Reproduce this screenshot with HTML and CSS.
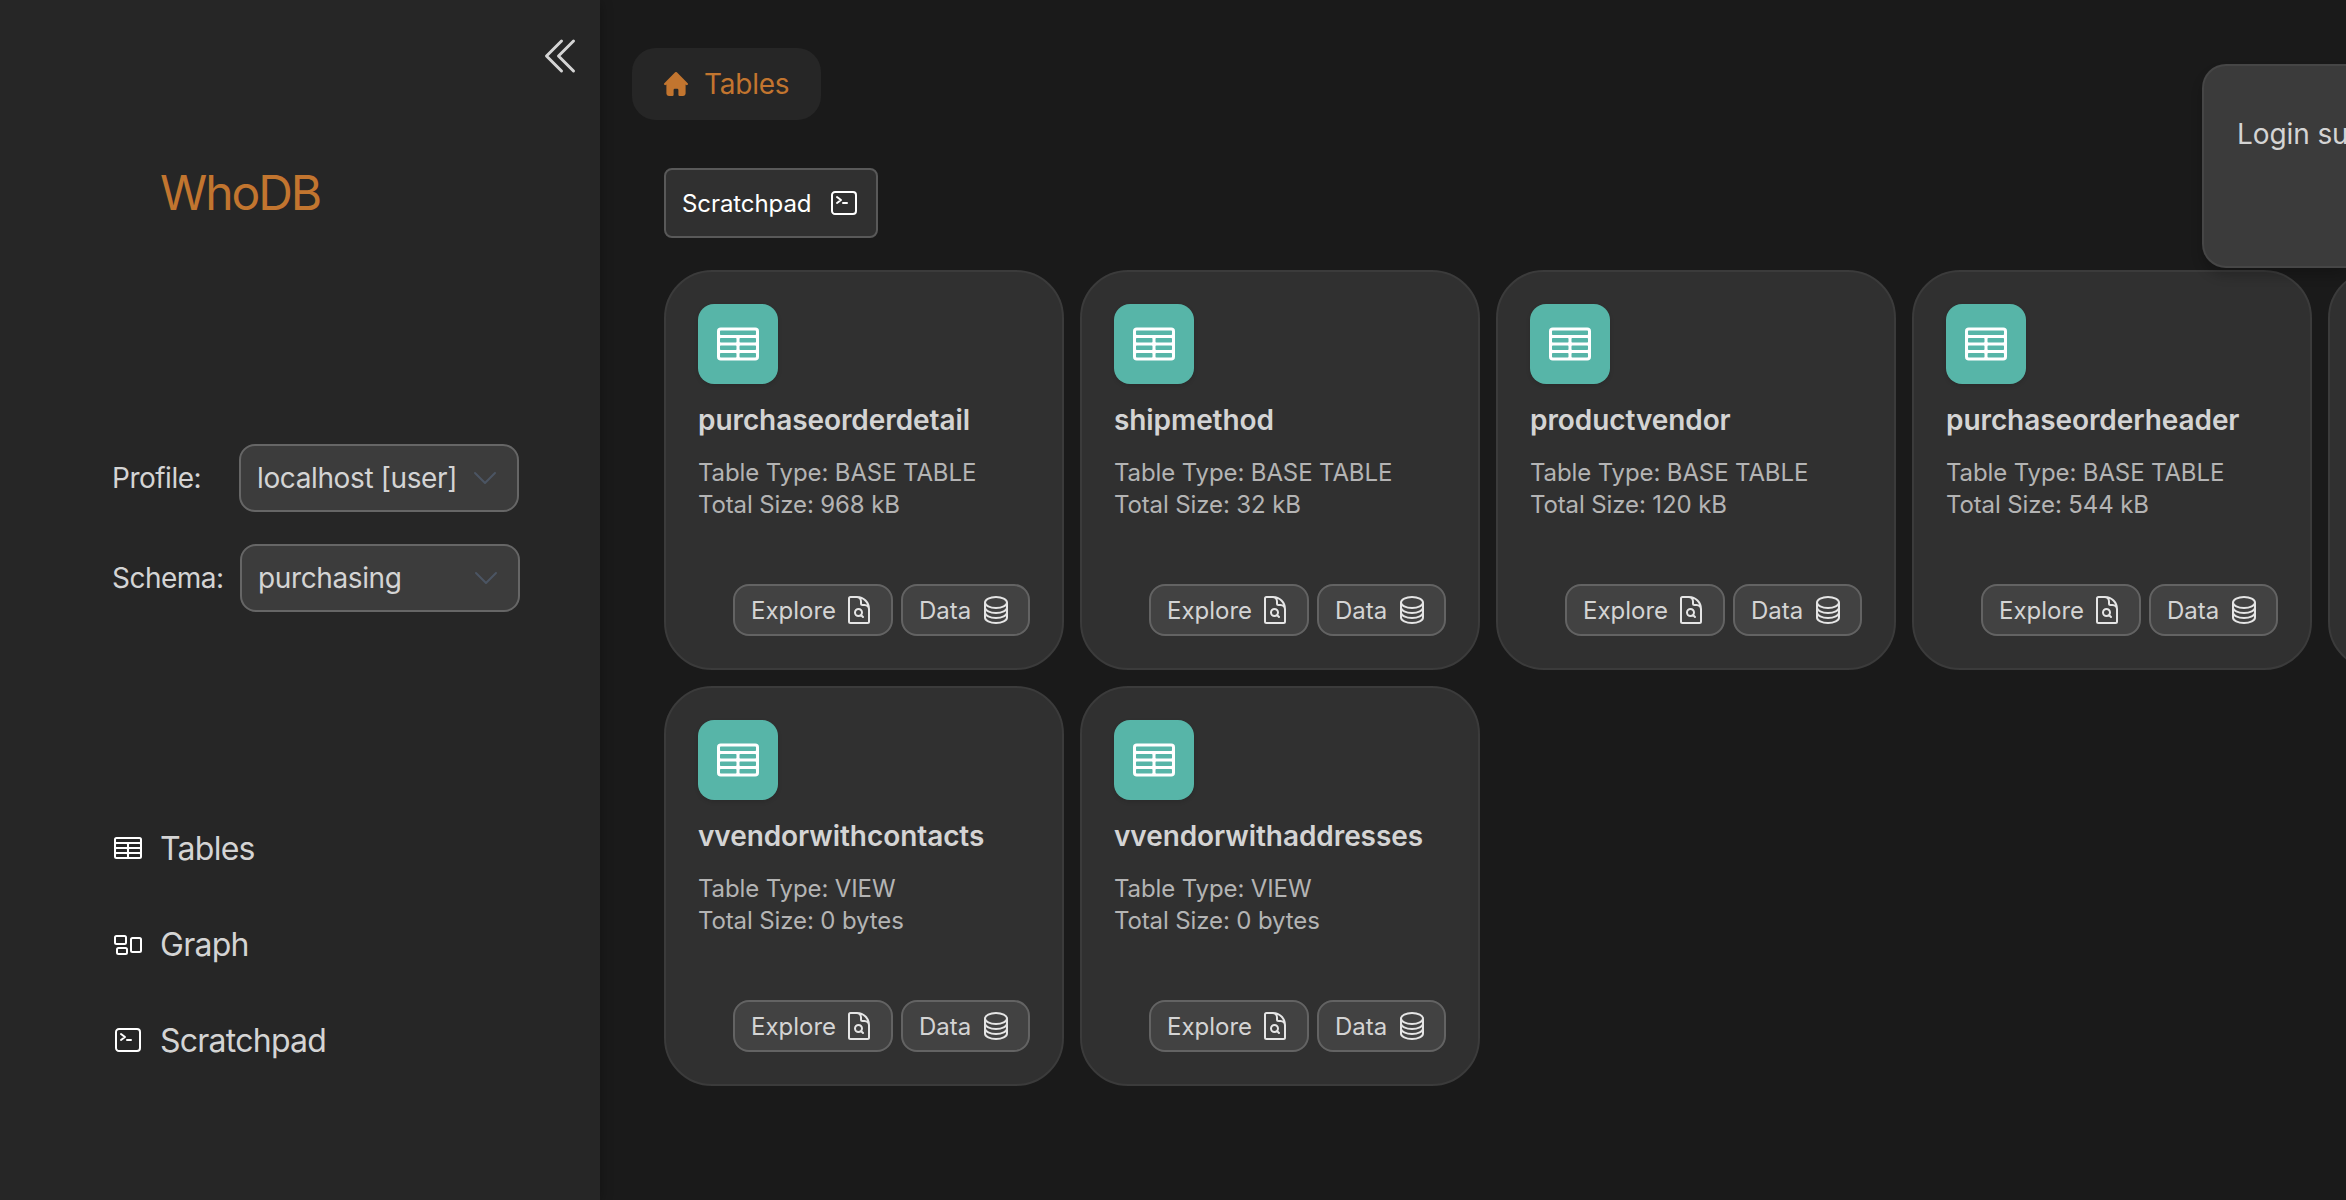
FILE: index.html
```html
<!DOCTYPE html>
<html lang="en">
<head>
<meta charset="utf-8">
<title>WhoDB</title>
<link rel="stylesheet" href="styles.css">
</head>
<body>
<svg class="sprite" aria-hidden="true">
  <symbol id="i-table" viewBox="0 0 24 24"><path fill="none" stroke="currentColor" stroke-width="1.5" stroke-linecap="round" stroke-linejoin="round" d="M3.375 19.5h17.25m-17.25 0a1.125 1.125 0 0 1-1.125-1.125M3.375 19.5h7.5c.621 0 1.125-.504 1.125-1.125m-9.75 0V5.625m0 12.75v-1.5c0-.621.504-1.125 1.125-1.125m18.375 2.625V5.625m0 12.75c0 .621-.504 1.125-1.125 1.125m1.125-1.125v-1.5c0-.621-.504-1.125-1.125-1.125m0 3.75h-7.5A1.125 1.125 0 0 1 12 18.375m9.75-12.75c0-.621-.504-1.125-1.125-1.125H3.375c-.621 0-1.125.504-1.125 1.125m19.5 0v1.5c0 .621-.504 1.125-1.125 1.125M2.25 5.625v1.5c0 .621.504 1.125 1.125 1.125m0 0h17.25m-17.25 0h7.5c.621 0 1.125.504 1.125 1.125M3.375 8.25c-.621 0-1.125.504-1.125 1.125v1.5c0 .621.504 1.125 1.125 1.125m17.25-3.75h-7.5c-.621 0-1.125.504-1.125 1.125m8.625-1.125c.621 0 1.125.504 1.125 1.125v1.5c0 .621-.504 1.125-1.125 1.125m-17.25 0h7.5m-7.5 0c-.621 0-1.125.504-1.125 1.125v1.5c0 .621.504 1.125 1.125 1.125M12 10.875v-1.5m0 1.5c0 .621-.504 1.125-1.125 1.125M12 10.875c0 .621.504 1.125 1.125 1.125m-2.25 0c.621 0 1.125.504 1.125 1.125M13.125 12h7.5m-7.5 0c-.621 0-1.125.504-1.125 1.125M20.625 12c.621 0 1.125.504 1.125 1.125v1.5c0 .621-.504 1.125-1.125 1.125m-17.25 0h7.5M12 14.625v-1.5m0 1.5c0 .621-.504 1.125-1.125 1.125M12 14.625c0 .621.504 1.125 1.125 1.125m-2.25 0c.621 0 1.125.504 1.125 1.125m0 1.5v-1.5m0 0c0-.621.504-1.125 1.125-1.125m0 0h7.5"/></symbol>
  <symbol id="i-graph" viewBox="0 0 24 24"><path fill="none" stroke="currentColor" stroke-width="1.5" stroke-linecap="round" stroke-linejoin="round" d="M2.25 7.125C2.25 6.504 2.754 6 3.375 6h6c.621 0 1.125.504 1.125 1.125v3.75c0 .621-.504 1.125-1.125 1.125h-6a1.125 1.125 0 0 1-1.125-1.125v-3.75ZM14.25 8.625c0-.621.504-1.125 1.125-1.125h5.25c.621 0 1.125.504 1.125 1.125v8.25c0 .621-.504 1.125-1.125 1.125h-5.25a1.125 1.125 0 0 1-1.125-1.125v-8.25ZM3.75 16.125c0-.621.504-1.125 1.125-1.125h5.25c.621 0 1.125.504 1.125 1.125v2.25c0 .621-.504 1.125-1.125 1.125h-5.25a1.125 1.125 0 0 1-1.125-1.125v-2.25Z"/></symbol>
  <symbol id="i-term" viewBox="0 0 24 24"><path fill="none" stroke="currentColor" stroke-width="1.5" stroke-linecap="round" stroke-linejoin="round" d="m6.75 7.5 3 2.25-3 2.25m4.5 0h3m-9 8.25h13.5A2.25 2.25 0 0 0 21 18V6a2.25 2.25 0 0 0-2.25-2.25H5.25A2.25 2.25 0 0 0 3 6v12a2.25 2.25 0 0 0 2.25 2.25Z"/></symbol>
  <symbol id="i-db" viewBox="0 0 24 24"><path fill="none" stroke="currentColor" stroke-width="1.5" stroke-linecap="round" stroke-linejoin="round" d="M20.25 6.375c0 2.278-3.694 4.125-8.25 4.125S3.75 8.653 3.75 6.375m16.5 0c0-2.278-3.694-4.125-8.25-4.125S3.75 4.097 3.75 6.375m16.5 0v11.25c0 2.278-3.694 4.125-8.25 4.125s-8.25-1.847-8.25-4.125V6.375m16.5 0v3.75m-16.5-3.75v3.75m16.5 0v3.75C20.25 16.153 16.556 18 12 18s-8.25-1.847-8.25-4.125v-3.75m16.5 0c0 2.278-3.694 4.125-8.25 4.125s-8.25-1.847-8.25-4.125"/></symbol>
  <symbol id="i-doc" viewBox="0 0 24 24"><path fill="none" stroke="currentColor" stroke-width="1.5" stroke-linecap="round" stroke-linejoin="round" d="M19.5 14.25v-2.625a3.375 3.375 0 0 0-3.375-3.375h-1.5A1.125 1.125 0 0 1 13.5 7.125v-1.5a3.375 3.375 0 0 0-3.375-3.375H8.25m5.231 13.481L15 17.25m-4.5-15H5.625c-.621 0-1.125.504-1.125 1.125v17.25c0 .621.504 1.125 1.125 1.125h12.75c.621 0 1.125-.504 1.125-1.125V11.25a9 9 0 0 0-9-9Zm3.75 11.625a2.625 2.625 0 1 1-5.25 0 2.625 2.625 0 0 1 5.25 0Z"/></symbol>
  <symbol id="i-chev" viewBox="0 0 24 24"><path fill="none" stroke="currentColor" stroke-width="1.5" stroke-linecap="round" stroke-linejoin="round" d="m19.5 8.25-7.5 7.5-7.5-7.5"/></symbol>
  <symbol id="i-collapse" viewBox="0 0 24 24"><path fill="none" stroke="currentColor" stroke-width="1.5" stroke-linecap="round" stroke-linejoin="round" d="m18.75 4.5-7.5 7.5 7.5 7.5m-6-15L5.25 12l7.5 7.5"/></symbol>
  <symbol id="i-home" viewBox="0 0 20 20"><path fill="currentColor" d="m19.707 9.293-2-2-7-7a1 1 0 0 0-1.414 0l-7 7-2 2a1 1 0 0 0 1.414 1.414L2 10.414V18a2 2 0 0 0 2 2h3a1 1 0 0 0 1-1v-4a1 1 0 0 1 1-1h2a1 1 0 0 1 1 1v4a1 1 0 0 0 1 1h3a2 2 0 0 0 2-2v-7.586l.293.293a1 1 0 0 0 1.414-1.414Z"/></symbol>
</svg>
<div class="app">
  <aside class="sidebar">
    <div class="collapse"><svg><use href="#i-collapse"/></svg></div>
    <h1 class="brand">WhoDB</h1>
    <div class="fields">
      <div class="field"><span class="field-label profile">Profile:</span><div class="select"><span>localhost [user]</span><svg><use href="#i-chev"/></svg></div></div>
      <div class="field"><span class="field-label schema">Schema:</span><div class="select"><span>purchasing</span><svg><use href="#i-chev"/></svg></div></div>
    </div>
    <nav class="nav">
      <a><svg><use href="#i-table"/></svg><span>Tables</span></a>
      <a><svg><use href="#i-graph"/></svg><span>Graph</span></a>
      <a><svg><use href="#i-term"/></svg><span>Scratchpad</span></a>
    </nav>
  </aside>
  <main class="main">
    <div class="crumb"><svg><use href="#i-home"/></svg><span>Tables</span></div>
    <div class="content">
      <button class="scratch"><span>Scratchpad</span><svg><use href="#i-term"/></svg></button>
      <div class="cards">
        <article class="card">
          <div class="badge"><svg><use href="#i-table"/></svg></div>
          <h2>purchaseorderdetail</h2>
          <p>Table Type: BASE TABLE<br>Total Size: 968 kB</p>
          <div class="actions"><button><span>Explore</span><svg><use href="#i-doc"/></svg></button><button><span>Data</span><svg><use href="#i-db"/></svg></button></div>
        </article>
        <article class="card">
          <div class="badge"><svg><use href="#i-table"/></svg></div>
          <h2>shipmethod</h2>
          <p>Table Type: BASE TABLE<br>Total Size: 32 kB</p>
          <div class="actions"><button><span>Explore</span><svg><use href="#i-doc"/></svg></button><button><span>Data</span><svg><use href="#i-db"/></svg></button></div>
        </article>
        <article class="card">
          <div class="badge"><svg><use href="#i-table"/></svg></div>
          <h2>productvendor</h2>
          <p>Table Type: BASE TABLE<br>Total Size: 120 kB</p>
          <div class="actions"><button><span>Explore</span><svg><use href="#i-doc"/></svg></button><button><span>Data</span><svg><use href="#i-db"/></svg></button></div>
        </article>
        <article class="card">
          <div class="badge"><svg><use href="#i-table"/></svg></div>
          <h2>purchaseorderheader</h2>
          <p>Table Type: BASE TABLE<br>Total Size: 544 kB</p>
          <div class="actions"><button><span>Explore</span><svg><use href="#i-doc"/></svg></button><button><span>Data</span><svg><use href="#i-db"/></svg></button></div>
        </article>
        <article class="card"></article>
        <article class="card">
          <div class="badge"><svg><use href="#i-table"/></svg></div>
          <h2>vvendorwithcontacts</h2>
          <p>Table Type: VIEW<br>Total Size: 0 bytes</p>
          <div class="actions"><button><span>Explore</span><svg><use href="#i-doc"/></svg></button><button><span>Data</span><svg><use href="#i-db"/></svg></button></div>
        </article>
        <article class="card">
          <div class="badge"><svg><use href="#i-table"/></svg></div>
          <h2>vvendorwithaddresses</h2>
          <p>Table Type: VIEW<br>Total Size: 0 bytes</p>
          <div class="actions"><button><span>Explore</span><svg><use href="#i-doc"/></svg></button><button><span>Data</span><svg><use href="#i-db"/></svg></button></div>
        </article>
      </div>
    </div>
  </main>
</div>
<div class="toast">Login su</div>
</body>
</html>
```
FILE: styles.css
```css
* { box-sizing: border-box; }
body { margin: 0; width: 2346px; height: 1200px; overflow: hidden; position: relative; background: #1a1a1a; color: #d4d4d4; font-family: Inter, "Liberation Sans", sans-serif; font-size: 28px; }
.sprite { display: none; }
svg { display: block; flex: none; }
button { font: inherit; color: inherit; margin: 0; padding: 0; }

.app { display: flex; height: 1200px; }

.sidebar { flex: none; width: 600px; background: #262626; box-shadow: 0 2px 12px rgba(0,0,0,.3); display: flex; flex-direction: column; position: relative; z-index: 1; }
.collapse { display: flex; justify-content: flex-end; padding: 32px 16px 0 0; height: 160px; }
.collapse svg { width: 48px; height: 48px; }
.brand { margin: 0 0 0 160px; font-size: 48px; font-weight: 400; line-height: 66px; letter-spacing: -2.1px; color: #c2752f; }
.fields { margin: 218px 0 0 112px; display: flex; flex-direction: column; gap: 32px; letter-spacing: -.38px; }
.field { display: flex; align-items: center; }
.field-label { letter-spacing: -.5px; }
.profile { width: 127px; }
.schema { width: 128px; }
.select { width: 280px; height: 68px; border: 2px solid #666; border-radius: 16px; background: #3c3c3c; display: flex; align-items: center; justify-content: space-between; padding: 0 16px; }
.select svg { width: 32px; height: 32px; color: #4b5563; }
.nav { margin: 204px 0 0 112px; display: flex; flex-direction: column; gap: 32px; }
.nav a { display: flex; align-items: center; height: 64px; gap: 16px; font-size: 32px; letter-spacing: -.75px; }
.nav svg { width: 32px; height: 32px; color: #fff; }

.main { flex: 1; min-width: 0; overflow: hidden; padding: 48px 0 0 32px; }
.crumb { display: flex; align-items: center; width: 189px; height: 72px; border-radius: 24px; background: #262626; color: #c2752f; padding-left: 32px; gap: 16px; letter-spacing: -.25px; }
.crumb svg { width: 24px; height: 24px; }
.content { padding: 48px 0 0 32px; }
.scratch { display: flex; align-items: center; width: 214px; height: 70px; border: 2px solid #595959; border-radius: 8px; background: #303030; color: #fff; font-size: 24px; letter-spacing: -.08px; padding: 0 16px; justify-content: space-between; }
.scratch svg { width: 32px; height: 32px; }

.cards { margin-top: 32px; display: grid; grid-template-columns: repeat(5, 400px); gap: 16px; }
.card { height: 400px; border: 2px solid #3b3b3b; border-radius: 48px; background: #303030; padding: 32px; display: flex; flex-direction: column; }
.badge { width: 80px; height: 80px; border-radius: 16px; background: #57b5a8; color: #fff; display: flex; align-items: center; justify-content: center; box-shadow: 0 2px 4px rgba(0,0,0,.12); }
.badge svg { width: 48px; height: 48px; }
.card h2 { margin: 16px 0 0; font-size: 28px; line-height: 40px; font-weight: 600; letter-spacing: -.08px; }
.card p { margin: 17px 0 0; font-size: 24px; line-height: 32px; letter-spacing: -.12px; color: #b4b4b4; }
.actions { margin-top: auto; display: flex; justify-content: flex-end; gap: 8px; }
.actions button { height: 52px; border: 2px solid #636363; border-radius: 16px; background: #424242; display: flex; align-items: center; justify-content: space-between; padding: 0 16px; font-size: 24px; width: 160px; }
.actions button:last-child { width: 129px; }
.actions svg { width: 32px; height: 32px; color: #e5e5e5; }

.toast { position: absolute; right: 0; top: 64px; width: 144px; height: 204px; border: 2px solid #464646; border-right: 0; border-radius: 24px 0 0 24px; background: #3b3b3b; padding: 48px 0 0 33px; line-height: 40px; letter-spacing: -.1px; white-space: nowrap; box-shadow: 0 8px 12px rgba(0,0,0,.2); z-index: 2; }
```
